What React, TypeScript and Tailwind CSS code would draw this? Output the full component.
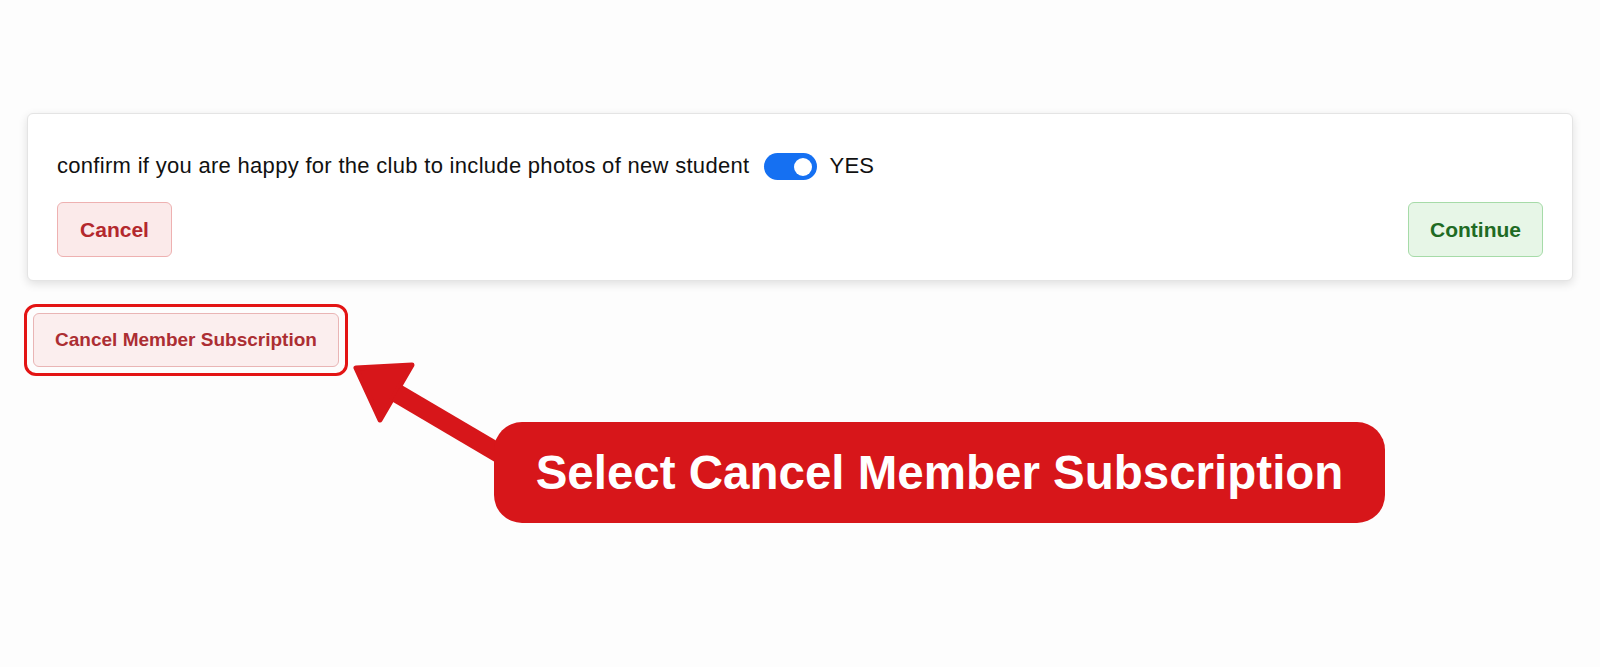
import { useState } from 'react';

export default function App() {
  const [photos, setPhotos] = useState(true);

  return (
    <div
      className="relative min-h-[667px] w-full bg-[#fdfdfd] px-[27px] pt-[113px]"
      style={{ fontFamily: '"Liberation Sans", Arial, sans-serif' }}
    >
      <div className="rounded-md border border-[#e4e4e4] bg-white px-[29px] pt-[39px] pb-[23px] shadow-[0_3px_10px_rgba(0,0,0,0.12)]">
        <div className="flex h-[27px] items-center text-[22px] tracking-[0.3px] text-[#111]">
          <span className="-mt-[3px]">confirm if you are happy for the club to include photos of new student</span>
          <button
            onClick={() => setPhotos(!photos)}
            className={`ml-[15px] flex h-[27px] w-[53px] items-center rounded-full px-[5px] ${
              photos ? 'justify-end bg-[#1570f2]' : 'justify-start bg-gray-300'
            }`}
          >
            <span className="h-[18px] w-[18px] rounded-full bg-white" />
          </button>
          <span className="-mt-[3px] ml-[12px]">{photos ? 'YES' : 'NO'}</span>
        </div>
        <div className="mt-[22px] flex items-center justify-between">
          <button className="h-[55px] w-[115px] rounded-md border border-[#eeb1b1] bg-[#fbeaea] text-[21px] font-bold text-[#b3282d]">
            Cancel
          </button>
          <button className="h-[55px] w-[135px] rounded-md border border-[#a6dba8] bg-[#e7f6e7] text-[21px] font-bold text-[#1f6b24]">
            Continue
          </button>
        </div>
      </div>

      <div className="ml-[-3px] mt-[23px] inline-block rounded-xl border-[3px] border-[#e31414] p-[6px]">
        <button className="h-[54px] w-[306px] rounded-md border border-[#e9b5b5] bg-[#fbeeee] text-[19px] font-bold text-[#ac2e33]">
          Cancel Member Subscription
        </button>
      </div>

      <svg className="absolute left-0 top-0" width="1600" height="667" viewBox="0 0 1600 667">
        <polygon
          points="356,368 412,365 380,420"
          fill="#d7161a"
          stroke="#d7161a"
          strokeWidth="5"
          strokeLinejoin="round"
        />
        <polygon points="391.8,401.3 505,468 514.4,451.4 401.2,384.7" fill="#d7161a" />
      </svg>

      <div className="absolute left-[494px] top-[422px] flex h-[101px] w-[891px] items-center justify-center rounded-[28px] bg-[#d7161a] text-[47.5px] font-bold text-white">
        Select Cancel Member Subscription
      </div>
    </div>
  );
}
